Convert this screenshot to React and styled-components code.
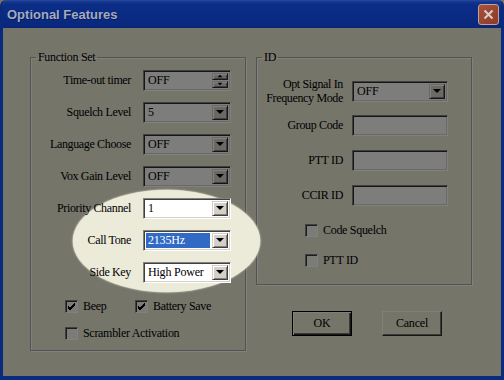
import React from "react";
import styled, { createGlobalStyle } from "styled-components";

const GlobalStyle = createGlobalStyle`
  html, body { margin: 0; padding: 0; background: #75756a; }
  body { font-family: "Liberation Serif", "Times New Roman", serif; }
`;

const dim = {
  face: "#75756a",
  field: "#7d7d7b",
  btnFace: "#6a6964",
  light: "#808080",
  shade: "#404040",
  dark: "#161616",
};

const lit = {
  face: "#ecead9",
  field: "#fff",
  btnFace: "#d4d0c8",
  light: "#fff",
  shade: "#808080",
  dark: "#404040",
};

const pal = (p) => (p.$lit ? lit : dim);

const Window = styled.div`
  position: relative;
  width: 504px;
  height: 380px;
  box-sizing: border-box;
  display: flex;
  flex-direction: column;
  background: ${dim.face};
  border-left: 3px solid #0a2a7e;
  border-right: 3px solid #0a2a7e;
  border-bottom: 4px solid #0a2a7e;
  border-radius: 6px 6px 0 0;
  overflow: hidden;
`;

const TitleBar = styled.div`
  height: 28px;
  margin: 0 -3px;
  padding: 0 7px;
  display: flex;
  align-items: center;
  justify-content: space-between;
  background: linear-gradient(
    to bottom,
    #2a4c9c 0px,
    #12358f 2px,
    #0c2d86 5px,
    #0a2a80 22px,
    #08257a 28px
  );
`;

const Title = styled.span`
  font-family: "Liberation Sans", Arial, sans-serif;
  font-weight: bold;
  font-size: 13px;
  color: #a3aac2;
  text-shadow: 1px 1px 0 #061a55;
`;

const CloseBtn = styled.div`
  width: 19px;
  height: 19px;
  margin-right: -2px;
  border: 1px solid #b8a6a4;
  border-radius: 3px;
  background: linear-gradient(135deg, #a9503a, #8f3a26);
  display: flex;
  align-items: center;
  justify-content: center;
`;

const Body = styled.div`
  position: relative;
  flex: 1;
  display: flex;
  gap: 10px;
  padding: 22px 0 0 27px;
`;

const Group = styled.fieldset`
  margin: 0;
  padding: ${(p) => p.$pad};
  box-sizing: border-box;
  width: 216px;
  height: ${(p) => p.$h}px;
  min-width: 0;
  border: 1px solid #55544c;
  box-shadow: inset 1px 1px 0 #808080, 1px 1px 0 #808080;
`;

const Legend = styled.legend`
  margin-left: 5px;
  padding: 0 2px;
  font-size: 12px;
  line-height: 14px;
  letter-spacing: -0.3px;
  color: #000;
`;

const RightCol = styled.div`
  display: flex;
  flex-direction: column;
`;

const Rows = styled.div`
  display: grid;
  grid-template-columns: ${(p) => p.$cols};
  column-gap: ${(p) => p.$gap}px;
`;

const Cell = styled.div`
  height: ${(p) => p.$h || 32}px;
  display: flex;
  align-items: center;
  justify-content: ${(p) => (p.$right ? "flex-end" : "flex-start")};
  position: relative;
  z-index: ${(p) => (p.$lit ? 2 : 0)};
`;

const Label = styled.span`
  font-size: 12px;
  line-height: 14px;
  letter-spacing: -0.35px;
  color: #000;
  text-align: right;
  white-space: nowrap;
`;

const Field = styled.div`
  box-sizing: border-box;
  width: 100%;
  height: 21px;
  display: flex;
  align-items: stretch;
  background: ${(p) => pal(p).field};
  border: 1px solid;
  border-color: ${(p) => pal(p).shade} ${(p) => pal(p).light}
    ${(p) => pal(p).light} ${(p) => pal(p).shade};
  box-shadow: inset 1px 1px 0 ${(p) => pal(p).dark},
    inset -1px -1px 0 ${(p) => pal(p).btnFace};
  padding: 2px;
`;

const Value = styled.span`
  flex: 1;
  min-width: 0;
  display: flex;
  align-items: center;
  padding-left: 2px;
  margin-right: 2px;
  font-size: 12px;
  letter-spacing: -0.2px;
  white-space: nowrap;
  overflow: hidden;
  color: ${(p) => (p.$sel ? "#fff" : "#000")};
  background: ${(p) => (p.$sel ? "#316ac5" : "transparent")};
`;

const DropBtn = styled.div`
  width: 16px;
  flex-shrink: 0;
  box-sizing: border-box;
  display: flex;
  align-items: center;
  justify-content: center;
  background: ${(p) => pal(p).btnFace};
  border: 1px solid;
  border-color: ${(p) => pal(p).btnFace} ${(p) => pal(p).dark}
    ${(p) => pal(p).dark} ${(p) => pal(p).btnFace};
  box-shadow: inset 1px 1px 0 ${(p) => pal(p).light},
    inset -1px -1px 0 ${(p) => pal(p).shade};
`;

const Arrow = styled.div`
  width: 0;
  height: 0;
  border-left: 4px solid transparent;
  border-right: 4px solid transparent;
  border-${(p) => (p.$up ? "bottom" : "top")}: 4px solid #000;
  transform: scale(${(p) => p.$s || 1});
`;

const Spin = styled.div`
  width: 16px;
  display: flex;
  flex-direction: column;
  gap: 1px;
`;

const SpinBtn = styled(DropBtn)`
  flex: 1;
`;

const Checks = styled.div`
  display: grid;
  grid-template-columns: ${(p) => p.$cols};
  row-gap: ${(p) => p.$rowGap}px;
  padding: ${(p) => p.$pad};
`;

const CheckItem = styled.label`
  display: flex;
  align-items: center;
  gap: 5px;
  font-size: 12px;
  line-height: 14px;
  letter-spacing: -0.3px;
  color: #000;
  grid-column: ${(p) => p.$span || "auto"};
`;

const Box = styled.span`
  box-sizing: border-box;
  width: 13px;
  height: 13px;
  display: flex;
  align-items: center;
  justify-content: center;
  background: #7b7b78;
  border: 1px solid;
  border-color: #404040 #80807c #80807c #404040;
  box-shadow: inset 1px 1px 0 #1c1c1c;
`;

const ButtonRow = styled.div`
  display: flex;
  gap: 30px;
  margin-top: 26px;
  padding-left: 36px;
`;

const Button = styled.div`
  box-sizing: border-box;
  width: 60px;
  height: 25px;
  display: flex;
  align-items: center;
  justify-content: center;
  font-size: 12px;
  letter-spacing: -0.2px;
  color: #000;
  background: ${dim.face};
  border: 1px solid;
  border-color: ${(p) =>
    p.$default ? "#000" : "#80807a #161616 #161616 #80807a"};
  box-shadow: ${(p) =>
    p.$default
      ? "inset 1px 1px 0 #80807a, inset -1px -1px 0 #161616, inset -2px -2px 0 #3a3a36"
      : "inset -1px -1px 0 #3a3a36"};
`;

// cream highlight drawn over the dialog; the lit rows sit above it
const Spotlight = styled.div`
  position: absolute;
  left: 70px;
  top: 162px;
  width: 187px;
  height: 102px;
  border-radius: 50%;
  background: #ecead9;
  box-shadow: 0 0 1.5px 0.5px #ecead9;
  z-index: 1;
  pointer-events: none;
`;

const Check = () => (
  <svg width="9" height="9" viewBox="0 0 9 9">
    <path
      d="M1 4 L3 6 L8 1 M1 5 L3 7 L8 2 M1 6 L3 8 L8 3"
      stroke="#000"
      strokeWidth="1"
      fill="none"
      shapeRendering="crispEdges"
    />
  </svg>
);

const CloseX = () => (
  <svg width="11" height="11" viewBox="0 0 11 11">
    <path d="M1.5 1.5 L9.5 9.5 M9.5 1.5 L1.5 9.5" stroke="#d8cfcc" strokeWidth="2" />
  </svg>
);

const functionRows = [
  { label: "Time-out timer", value: "OFF", spin: true },
  { label: "Squelch Level", value: "5" },
  { label: "Language Choose", value: "OFF" },
  { label: "Vox Gain Level", value: "OFF" },
  { label: "Priority Channel", value: "1", lit: true },
  { label: "Call Tone", value: "2135Hz", lit: true, sel: true },
  { label: "Side Key", value: "High Power", lit: true },
];

const idRows = [
  { label: ["Opt Signal In", "Frequency Mode"], value: "OFF", drop: true, h: 34 },
  { label: ["Group Code"], h: 34 },
  { label: ["PTT ID"], h: 36 },
  { label: ["CCIR ID"], h: 34 },
];

const Combo = ({ value, lit: isLit, sel, spin, drop }) => (
  <Field $lit={isLit}>
    <Value $sel={sel}>{value}</Value>
    {spin ? (
      <Spin>
        <SpinBtn>
          <Arrow $up $s={0.6} />
        </SpinBtn>
        <SpinBtn>
          <Arrow $s={0.6} />
        </SpinBtn>
      </Spin>
    ) : (
      drop && (
        <DropBtn $lit={isLit}>
          <Arrow />
        </DropBtn>
      )
    )}
  </Field>
);

export default function App() {
  return (
    <>
      <GlobalStyle />
      <Window>
        <TitleBar>
          <Title>Optional Features</Title>
          <CloseBtn>
            <CloseX />
          </CloseBtn>
        </TitleBar>
        <Body>
          <Group $h={301} $pad="0">
            <Legend>Function Set</Legend>
            <Rows $cols="100px 88px" $gap={12}>
              {functionRows.map((r) => (
                <React.Fragment key={r.label}>
                  <Cell $right $lit={r.lit}>
                    <Label>{r.label}</Label>
                  </Cell>
                  <Cell $lit={r.lit}>
                    <Combo {...r} drop />
                  </Cell>
                </React.Fragment>
              ))}
            </Rows>
            <Checks $cols="70px auto" $rowGap={13} $pad="11px 0 0 34px">
              <CheckItem>
                <Box>
                  <Check />
                </Box>
                Beep
              </CheckItem>
              <CheckItem>
                <Box>
                  <Check />
                </Box>
                Battery Save
              </CheckItem>
              <CheckItem $span="1 / 3">
                <Box />
                Scrambler Activation
              </CheckItem>
            </Checks>
          </Group>
          <RightCol>
            <Group $h={235} $pad="10px 0 0 0">
              <Legend>ID</Legend>
              <Rows $cols="86px 96px" $gap={9}>
                {idRows.map((r) => (
                  <React.Fragment key={r.label[0]}>
                    <Cell $right $h={r.h}>
                      <Label>
                        {r.label.map((l) => (
                          <div key={l}>{l}</div>
                        ))}
                      </Label>
                    </Cell>
                    <Cell $h={r.h}>
                      <Combo value={r.value} drop={r.drop} />
                    </Cell>
                  </React.Fragment>
                ))}
              </Rows>
              <Checks $cols="auto" $rowGap={16} $pad="11px 0 0 48px">
                <CheckItem>
                  <Box />
                  Code Squelch
                </CheckItem>
                <CheckItem>
                  <Box />
                  PTT ID
                </CheckItem>
              </Checks>
            </Group>
            <ButtonRow>
              <Button $default>OK</Button>
              <Button>Cancel</Button>
            </ButtonRow>
          </RightCol>
          <Spotlight />
        </Body>
      </Window>
    </>
  );
}
